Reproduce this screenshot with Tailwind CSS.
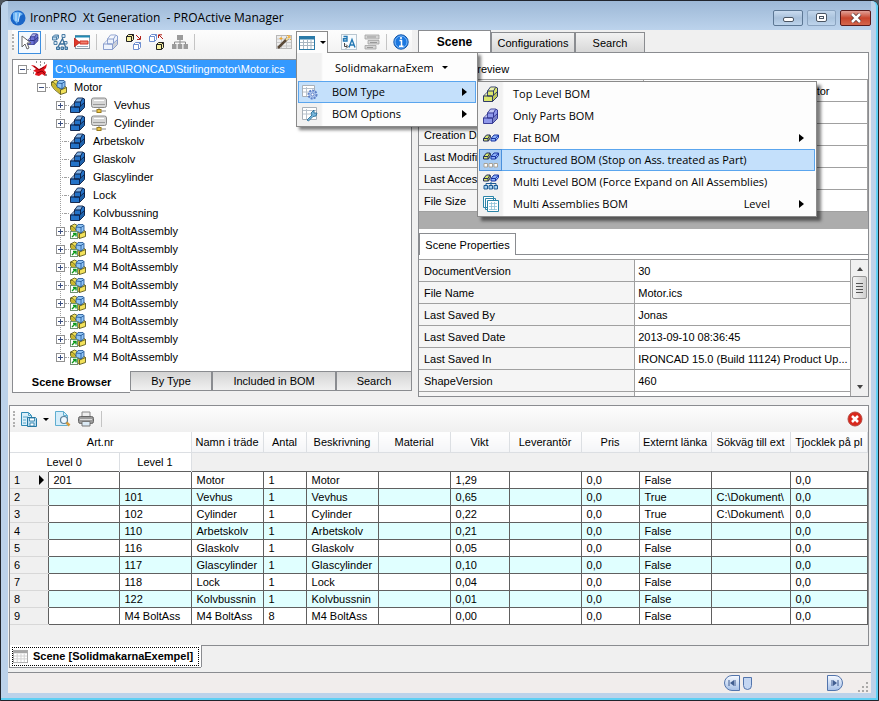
<!DOCTYPE html>
<html lang="sv">
<head>
    <meta charset="UTF-8">
    <meta name="viewport" content="width=device-width, initial-scale=1.0">
    <title>IronPRO Xt Generation - PROActive Manager</title>
    <script src="https://cdn.jsdelivr.net/npm/@tailwindcss/browser@4"></script>
</head>
<body class="bg-[#50575f] font-['Liberation_Sans',Arial,sans-serif] text-[11px] leading-4 text-black">

    <!-- icon set -->
    <svg class="hidden" aria-hidden="true">
        <symbol id="i-part" viewBox="0 0 16 16">
            <g stroke-linejoin="round" fill="currentColor" stroke-width=".9">
                <path d="M4.500 5l3-4h5l2 1v6l-3 3h-7z"/>
                <path d="M.5 10l4-4v4h5l5-4.500v5l-5 5h-9z"/>
                <path d="M5 4.800L7.700 1.500h4.600L10.500 4.800z M1 9.600l3.300-3v3z" fill="#fff" fill-opacity=".45" stroke="none"/>
                <path d="M10 10.200l4-3.500v3.700l-4 4z" fill="#000" fill-opacity=".15" stroke="none"/>
                <path d="M.5 10h9v5.500 M4.500 5h6v4.500 M10.500 5l2-3.500" fill="none"/>
            </g>
        </symbol>
        <symbol id="i-cube" viewBox="0 0 8 8">
            <path d="M.5 2.500l2-2h5v5l-2 2h-5z M.5 2.500h5v5 M5.500 2.500l2-2" stroke-linejoin="round"/>
        </symbol>
        <symbol id="i-assembly" viewBox="0 0 16 16">
            <g stroke="#4a4712" stroke-width=".8" stroke-linejoin="round">
                <path d="M.5 3l4-2 3 1.500 8 6v5l-6 2-6-5-3-4z" fill="#f2e15a"/>
                <path d="M.5 3l3 1 6 7v4.500 M9.500 11l6-2.500" fill="none"/>
                <path d="M1 4l2.500 1 5.500 6.500v3L4 10 1 6.500z" fill="#c9b62c" stroke="none"/>
                <path d="M6 4l2-2.500h5l1 1v5l-3 2.500-5-2z" fill="#8fc4f5" stroke="#1a4f90"/>
                <path d="M6 4l5 .5V10 M11 4.500l3-2" fill="none" stroke="#1a4f90"/>
            </g>
        </symbol>
        <symbol id="i-link" viewBox="0 0 16 16">
            <use href="#i-assembly"/>
            <rect x=".5" y="8.500" width="7" height="7" fill="#fff" stroke="#6f8f6f"/>
            <path d="M2 14l3-3 M3 10.500h3v3" fill="none" stroke="#0d9a1c" stroke-width="1.400"/>
        </symbol>
        <symbol id="i-disk" viewBox="0 0 16 16">
            <rect x=".5" y="1" width="15" height="9.500" rx="2" fill="#d6d6d6" stroke="#8a8a8a"/>
            <path d="M3 3.500h10" stroke="#fff"/><path d="M2 7.500h12" stroke="#9a9a9a"/>
            <path d="M8 10v3 M1 14h14" stroke="#8a8a8a"/><rect x="6" y="12.500" width="4" height="3" fill="#f0c94a" stroke="#9a7d20"/>
        </symbol>
        <symbol id="i-root" viewBox="0 0 18 16">
            <path d="M0 4l3 .5 5 3.500 4-2 4-3-1 4-2 2 2 2-1 4-3-2-3 2-4-1 1-3-3-1 3-2z" fill="#e0141c"/>
            <path d="M3 5l5 4 5-3 M6 12l5-2 3 3" stroke="#8b0008" fill="none"/>
            <path d="M9 1h1M5 1h1M13 2h1M2 12h1M14 14h2M9 4h1" stroke="#222"/>
        </symbol>
        <symbol id="i-letters" viewBox="0 0 16 16">
            <path d="M.5 3l2-2h4v3l-2 2h-4z M.5 3h4v3 M4.500 3l2-2" fill="#bcd8ee" stroke="#4d7fa6"/>
            <path d="M10 .5h3v3h-3z M2 7.500h3v3H2z M12 7.500h3v2.500h-3z" fill="#dbeaf6" stroke="#4d7fa6"/>
            <path d="M6 13l4.500-8.500 3 8.500 M7.500 10h5" fill="none" stroke="#3b6f99" stroke-width="1.300"/>
            <path d="M4.500 13h3v2.500h-3z M9 13h2.500v2.500H9z M13 13h2.500v2.500H13z" fill="#8fbadb" stroke="#3b6f99"/>
        </symbol>
        <symbol id="i-sheet" viewBox="0 0 16 16">
            <rect x=".5" y="1.500" width="15" height="13" fill="#fff" stroke="#2b7aa8"/>
            <path d="M1 3h14" stroke="#2b7aa8" stroke-width="3"/>
            <path d="M1 7.500h14M1 10.500h14M4.500 5v9M8.500 5v9M12 5v9" stroke="#a9b7c2"/>
        </symbol>
        <symbol id="i-outdent" viewBox="0 0 16 16">
            <rect x="1.500" y="1.500" width="14" height="13" fill="#fff" stroke="#8a9aa5"/>
            <path d="M1 2.500h15" stroke="#1f8ab5" stroke-width="2"/>
            <path d="M6 7h8v3H6z" fill="#f08070" stroke="#d03020"/><path d="M3 12.500h11" stroke="#9ab"/>
            <path d="M0 4l6 4.500L0 13z" fill="#e0392b" stroke="#a01810" stroke-width=".6"/>
        </symbol>
        <symbol id="i-org" viewBox="0 0 16 16">
            <path d="M5 1h6v5H5zM0 10h4.500v5H0zM11.500 10H16v5h-4.500zM5.750 10h4.500v5h-4.500z" fill="#9b9b9b"/><path d="M8 6v4M2.500 10V8h11v2" stroke="#8d8d8d" fill="none"/>
        </symbol>
        <symbol id="i-wand" viewBox="0 0 16 16">
            <rect x=".5" y="1.500" width="15" height="13" fill="#ececec" stroke="#b8b8b8"/><path d="M1 5h14M1 8.500h14M1 12h14M5.500 2v12M10.500 2v12" stroke="#c8c8c8"/>
            <path d="M2 14L12 4" stroke="#5b4a38" stroke-width="2.500"/><path d="M10 6l3-3" stroke="#f3dfa0" stroke-width="2"/>
            <path d="M13 1v3M15 3h-3M11 1l1 1M15 6l-1-1M5 3v3M3.500 4.500h3" stroke="#efa62c"/>
        </symbol>
        <symbol id="i-translate" viewBox="0 0 16 16">
            <rect x=".5" y=".5" width="15" height="15" fill="#f6fafd" stroke="#b9c6d0"/>
            <path d="M2.500 2.500h3.500v4.500H2.500V4.800h3.500 M8 13.500l3-8 3 8 M9 11h4" fill="none" stroke="#2378b4" stroke-width="1.400"/><path d="M3.500 9v3.500h2.500M5 10.500l2 2-2 2" stroke="#444" fill="none"/>
        </symbol>
        <symbol id="i-greylist" viewBox="0 0 16 16">
            <path d="M1 1h14v4H1zM4 6.500h11v3.500H4zM1 11.500h11v3.500H1z" fill="#d4d4d4" stroke="#a2a2a2" stroke-width=".8"/><path d="M3 3h9M6 8.500h7M3 13.500h6" stroke="#999"/>
        </symbol>
        <symbol id="i-info" viewBox="0 0 16 16">
            <circle cx="8" cy="8" r="7.200" fill="#1c78e0" stroke="#1356a8"/><circle cx="8" cy="8" r="6" fill="none" stroke="#7bb8fa"/>
            <path d="M6.500 6.500h2v5.500M6 12.200h4.500" stroke="#fff" stroke-width="1.500" fill="none"/><circle cx="8" cy="4" r="1.100" fill="#fff"/>
        </symbol>
        <symbol id="i-gear" viewBox="0 0 16 16">
            <path d="M.5 1.500h12v11H.5z" fill="#fff" stroke="#a8b0b8"/><path d="M1 4.500h11M1 8h11M4.500 3v9" stroke="#b8c2cc"/>
            <circle cx="10.500" cy="10.500" r="4" fill="#b6cdf0" stroke="#5f82c8" stroke-width="2" stroke-dasharray="2 1"/><circle cx="10.500" cy="10.500" r="1.500" fill="#fff" stroke="#5f82c8"/>
        </symbol>
        <symbol id="i-wrench" viewBox="0 0 16 16">
            <path d="M.5 1.500h14v12H.5z" fill="#fff" stroke="#a8b0b8"/><path d="M1 4.500h13M1 8h13M4.500 3v10" stroke="#b8c2cc"/>
            <path d="M5 14l5-5-1-2 3-3v3h3l-1 3-3 .5-4.500 4.500z" fill="#78b7dc" stroke="#2a6f98" stroke-width=".9"/>
        </symbol>
        <symbol id="i-pair" viewBox="0 0 16 8">
            <path d="M.5 4.500L3.500 1H7l.5 2-2 4H.5z" fill="#d9e86a" stroke="#222c58"/><path d="M.5 4.500h4.500V7 M5 4.500L7 1" fill="none" stroke="#222c58"/>
            <path d="M8 4.500L11 1h4.500v2.500L12.500 7H8z" fill="#8fb4fa" stroke="#1733a0"/><path d="M8 4.500h4.500V7 M12.500 4.500L15.500 1" fill="none" stroke="#1733a0"/>
        </symbol>
        <symbol id="i-flat" viewBox="0 0 16 16"><use href="#i-pair" y="4" width="16" height="8"/></symbol>
        <symbol id="i-struct" viewBox="0 0 16 16">
            <use href="#i-pair" width="16" height="8"/><path d="M1 11.500h3.500v3.500H1zM6 11.500h3.500v3.500H6zM11 11.500h3.500v3.500H11z" fill="#fff" stroke="#aaa498"/>
        </symbol>
        <symbol id="i-multi" viewBox="0 0 16 16">
            <use href="#i-pair" width="16" height="8"/><path d="M8 8v3M3 11V9.500h10V11" stroke="#1d5b94" fill="none"/><path d="M1 11.500h3.500v3.500H1zM6 11.500h3.500v3.500H6zM11 11.500h3.500v3.500H11z" fill="#a9d4f2" stroke="#1d5b94"/>
        </symbol>
        <symbol id="i-stack" viewBox="0 0 16 16">
            <path d="M.5 .5h10v11H.5z M2.500 2.500h10v11h-10z" fill="#fff" stroke="#2c85a8"/><path d="M4.500 4.500h11v11h-11z" fill="#fff" stroke="#2c85a8"/><path d="M6 7.500h8M6 10.500h8M6 13.500h8M8.500 6v8M11.500 6v8" stroke="#8cc0d6" stroke-width=".8"/>
        </symbol>
        <symbol id="i-save" viewBox="0 0 16 16">
            <path d="M.5 1.500h7l3 3v10H.5z" fill="#d9effa" stroke="#2f8ab5"/><path d="M7.500 1.500v3h3M2 6h5M2 9h3M2 12h3" fill="none" stroke="#5aa6c9"/>
            <path d="M6.500 6.500h8l1 1v8h-9z" fill="#b8dcf0" stroke="#2678a3"/><path d="M8.500 7h5v3h-5zM9 12h4v3H9z" fill="#fff" stroke="#2678a3" stroke-width=".8"/>
        </symbol>
        <symbol id="i-preview" viewBox="0 0 16 16">
            <path d="M.5 .5h8l4 4v10H.5z" fill="#d5edfa" stroke="#5faed0"/><path d="M8.500 .5v4h4" fill="none" stroke="#5faed0"/>
            <circle cx="9" cy="9" r="3.500" fill="#eef8ff" stroke="#5c7f98" stroke-width="1.200"/><path d="M11.500 11.500l3 3" stroke="#d49a3a" stroke-width="2.500"/>
        </symbol>
        <symbol id="i-print" viewBox="0 0 16 16">
            <path d="M4 1h8v5H4z" fill="#eee" stroke="#888"/><rect x=".5" y="5.500" width="15" height="7" rx="2" fill="#9a9a9a" stroke="#666"/><path d="M2 8.500h12" stroke="#dcdcdc"/><path d="M4 10.500h8v4.500H4z" fill="#dbeaf5" stroke="#777"/>
        </symbol>
    </svg>

    <div class="flex min-h-screen flex-col rounded-t-lg border border-[#20242c] bg-[#b9d1ea]">
        <div class="flex flex-1 flex-col rounded-t-md border-r-2 border-b-2 border-[#5fd0f4] bg-[#bcd2ea] pr-[5px] pb-[5px] pl-[7px]">

            <!-- title bar -->
            <header class="flex h-[29px] items-center bg-linear-to-b from-[#9db8d6] to-[#bcd3ec] pt-1 pl-[2px]">
                <svg class="mr-1 size-4" viewBox="0 0 16 16"><circle cx="8" cy="8" r="7.500" fill="#1a66c8"/><path d="M3 3q5-3 10 1l-4 3-2 7-4-5z" fill="#6cb4f5"/><path d="M6 3v8M10 3l-2 9" stroke="#d4ecff"/></svg>
                <h1 class="flex-1 font-['Open_Sans',sans-serif] text-[12px] whitespace-pre">IronPRO  Xt Generation  - PROActive Manager</h1>
                <div class="flex gap-1">
                    <button aria-label="Minimize" class="flex h-4 w-[30px] items-center justify-center rounded-xs border border-[#5c7794] bg-linear-to-b from-[#cadcf0] via-[#a8c0da] to-[#bdd4ec] pt-1"><span class="h-[5px] w-[11px] rounded-xs border border-[#4a5563] bg-white"></span></button>
                    <button aria-label="Maximize" class="flex h-4 w-[29px] items-center justify-center rounded-xs border border-[#8ba4c0] bg-linear-to-b from-[#c3d7ec] via-[#aac3dd] to-[#bdd4ec]"><span class="flex h-[9px] w-[11px] items-center justify-center rounded-xs border border-[#4a5563] bg-white"><span class="h-[3px] w-[5px] border border-[#4a5563]"></span></span></button>
                    <button aria-label="Close" class="flex h-4 w-[31px] items-center justify-center rounded-xs border border-[#5a1a1a] bg-linear-to-b from-[#e0a097] via-[#c8442c] to-[#d4664c]"><svg class="h-[10px] w-3" viewBox="0 0 12 10"><path d="M2 1l8 8M10 1L2 9" stroke="#5a3030" stroke-width="4"/><path d="M2 1l8 8M10 1L2 9" stroke="#fff" stroke-width="2.500"/></svg></button>
                </div>
            </header>

            <main class="flex flex-1 flex-col bg-[#f0f0f0]">
                <div class="grid h-[367px] grid-cols-[410fr_453fr] grid-rows-[minmax(0,1fr)]">

                    <!-- scene browser -->
                    <section class="flex min-h-0 min-w-0 flex-col pr-[6px] pl-1">
                        <div class="flex h-[29px] shrink-0 items-center bg-linear-to-b from-[#fdfdfd] to-[#f0f0f0] pr-[3px] pb-[5px]">
                            <span class="mr-1 h-4 border-l-2 border-dotted border-[#b0b0b0]"></span>
                            <button aria-label="Select parts" class="flex size-[23px] items-center justify-center border border-[#3c8ee0] bg-[#f4f9ff]">
                                <svg class="h-[18px] w-[18px]" viewBox="0 0 18 18"><use href="#i-part" x="6" y="0" width="12" height="12" color="#6d74d8" stroke="#23287a"/><path d="M1 3v11l3-3 2 5 2-1-2-5h4z" fill="#fff" stroke="#666"/></svg>
                            </button>
                            <span class="mx-1 h-4 border-l border-[#c4c4c4]"></span>
                            <button aria-label="Number parts" class="ml-[2px] size-4"><svg class="size-4"><use href="#i-letters"/></svg></button>
                            <button aria-label="Remove from list" class="ml-[6px] size-4"><svg class="size-4"><use href="#i-outdent"/></svg></button>
                            <span class="mx-[6px] h-4 border-l border-[#c4c4c4]"></span>
                            <button aria-label="Part" class="size-4"><svg class="size-4 stroke-[#8095c8] text-[#eef3fc]"><use href="#i-part"/></svg></button>
                            <button aria-label="Move down" class="ml-[7px] size-4"><svg class="size-4" viewBox="0 0 16 16"><use href="#i-cube" x="0" y="0" width="8" height="8" fill="#f6f0a0" stroke="#222"/><use href="#i-cube" x="7" y="8" width="8" height="8" fill="#fff" stroke="#6f8fd0"/><path d="M10 1l4 4M14.500 2v3.500H11" fill="none" stroke="#b02018"/></svg></button>
                            <button aria-label="Move up" class="ml-[7px] size-4"><svg class="size-4" viewBox="0 0 16 16"><use href="#i-cube" x="0" y="0" width="8" height="8" fill="#fff" stroke="#6f8fd0"/><use href="#i-cube" x="7" y="8" width="8" height="8" fill="#f6f0a0" stroke="#222"/><path d="M14 5l-4-4M9.500 4V.8H13" fill="none" stroke="#b02018"/></svg></button>
                            <button aria-label="Structure" class="ml-[7px] size-4"><svg class="size-4"><use href="#i-org"/></svg></button>
                            <span class="mx-[6px] h-4 border-l border-[#c4c4c4]"></span>
                            <span class="flex-1"></span>
                            <button aria-label="Wizard" class="mr-1 size-4"><svg class="size-4"><use href="#i-wand"/></svg></button>

                            <!-- BOM drop-down, shown open -->
                            <div class="relative z-10">
                                <button aria-label="BOM" aria-expanded="true" class="relative z-20 flex h-[22px] w-8 items-center gap-[5px] border border-b-0 border-[#8a8a8a] bg-[#fdfdfd] pl-[2px]"><svg class="size-4"><use href="#i-sheet"/></svg><span class="border-x-[3px] border-t-[3px] border-x-transparent border-t-black"></span></button>
                                <div class="absolute top-[21px] left-0 w-[182px] border border-[#8a8a8a] bg-[#fdfdfd] bg-linear-to-r from-[#f1f1f1] from-[24px] to-[#fdfdfd] to-[26px] p-px font-['Open_Sans',sans-serif] text-[11px] shadow-[3px_3px_3px_rgba(0,0,0,0.5)]">
                                    <div class="flex h-[27px] items-center pl-[37px]">
                                        <select aria-label="Template" class="w-[98px] appearance-none overflow-hidden text-clip whitespace-nowrap"><option>SolidmakarnaExempel</option></select>
                                        <span class="ml-[9px] border-x-[3px] border-t-[3px] border-x-transparent border-t-black"></span>
                                    </div>
                                    <button class="flex h-[22px] w-full items-center border border-[#5aa5ee] bg-[#c4e0fb] pr-2 pl-[3px] text-left"><svg class="mr-[14px] size-4"><use href="#i-gear"/></svg><span class="flex-1">BOM Type</span><span class="border-y-4 border-l-[5px] border-y-transparent border-l-black"></span></button>
                                    <button class="flex h-[22px] w-full items-center border border-transparent pr-2 pl-[3px] text-left"><svg class="mr-[14px] size-4"><use href="#i-wrench"/></svg><span class="flex-1">BOM Options</span><span class="border-y-4 border-l-[5px] border-y-transparent border-l-black"></span></button>
                                    <div id="bom-types" class="absolute top-[28px] left-[180px] w-[340px] border border-[#8a8a8a] bg-linear-to-r from-[#f1f1f1] from-[24px] to-[#fdfdfd] to-[26px] p-px shadow-[4px_4px_3px_rgba(0,0,0,0.5)]"></div>
                                </div>
                            </div>

                            <button aria-label="Translate" class="ml-[13px] size-4"><svg class="size-4"><use href="#i-translate"/></svg></button>
                            <button aria-label="List" class="ml-[7px] size-4"><svg class="size-4"><use href="#i-greylist"/></svg></button>
                            <span class="mx-[6px] h-4 border-l border-[#c4c4c4]"></span>
                            <button aria-label="Info" class="size-4"><svg class="size-4"><use href="#i-info"/></svg></button>
                        </div>

                        <div class="min-h-0 flex-1 border border-b-0 border-[#8a8c90] bg-white pl-[5px]">
                            <ul id="tree"></ul>
                        </div>
                        <nav class="flex h-[26px] shrink-0 items-start">
                            <button class="h-[22px] flex-[119] border-b border-l border-[#8a8c90] bg-white font-bold">Scene Browser</button>
                            <button class="h-5 flex-[81] border border-[#8a8c90] bg-linear-to-b from-[#d4d4d4] to-[#f0f0f0]">By Type</button>
                            <button class="h-5 flex-[124] border border-[#8a8c90] bg-linear-to-b from-[#d4d4d4] to-[#f0f0f0]">Included in BOM</button>
                            <button class="h-5 flex-[75] border border-[#8a8c90] bg-linear-to-b from-[#d4d4d4] to-[#f0f0f0]">Search</button>
                        </nav>
                    </section>

                    <!-- scene info -->
                    <section class="flex min-h-0 min-w-0 flex-col pr-[2px]">
                        <nav class="flex h-[22px] shrink-0 items-end">
                            <button class="h-[22px] w-[73px] border border-b-0 border-[#8a8c90] bg-white text-[12px] font-bold">Scene</button>
                            <button class="h-5 w-[84px] border border-b-0 border-[#8a8c90] bg-linear-to-b from-[#f2f2f2] to-[#d8d8d8]">Configurations</button>
                            <button class="h-5 w-[70px] border border-b-0 border-[#8a8c90] bg-linear-to-b from-[#f2f2f2] to-[#d8d8d8]">Search</button>
                        </nav>
                        <div class="flex min-h-0 flex-1 flex-col border border-[#8a8c90] bg-white">
                            <h2 class="h-[26px] shrink-0 pt-2 pl-[51px]">Preview</h2>
                            <div class="h-[150px] shrink-0 bg-[#acacac]">
                                <table class="w-full table-fixed border-collapse">
                                    <tbody id="file-info"></tbody>
                                </table>
                            </div>
                            <div class="mt-1 flex shrink-0 items-end">
                                <button class="h-[22px] w-[97px] border border-b-0 border-[#8a8c90] bg-white">Scene Properties</button>
                                <span class="flex-1 border-t border-[#8a8c90]"></span>
                            </div>
                            <div class="mt-1 flex min-h-0 flex-1">
                                <div class="flex-1 overflow-hidden">
                                    <table class="w-full table-fixed border-collapse">
                                        <tbody id="scene-props"></tbody>
                                    </table>
                                </div>
                                <div class="flex w-[17px] flex-col items-center border-t border-[#8a8c90] bg-[#f0f0f0] py-[7px]">
                                    <span class="border-x-[3px] border-b-4 border-x-transparent border-b-[#444]"></span>
                                    <span class="mt-[5px] flex h-[23px] w-[15px] flex-col items-center justify-center gap-[2px] rounded-xs border border-[#979797] bg-linear-to-r from-[#f5f5f5] to-[#cfcfcf]">
                                        <span class="w-[7px] border-t border-[#555]"></span><span class="w-[7px] border-t border-[#555]"></span><span class="w-[7px] border-t border-[#555]"></span><span class="w-[7px] border-t border-[#555]"></span>
                                    </span>
                                    <span class="mt-auto border-x-[3px] border-t-4 border-x-transparent border-t-[#444]"></span>
                                </div>
                            </div>
                        </div>
                    </section>
                </div>

                <!-- bill of materials -->
                <section class="mt-2 mr-[2px] ml-px flex flex-1 flex-col border border-b-0 border-[#8a8c90]">
                    <div class="flex h-[26px] items-center bg-linear-to-b from-[#fdfdfd] to-[#f0f0f0] pr-[5px] pl-[3px]">
                        <span class="mr-[6px] h-4 border-l-2 border-dotted border-[#b0b0b0]"></span>
                        <button aria-label="Save" class="flex items-center gap-[6px]"><svg class="size-4"><use href="#i-save"/></svg><span class="border-x-[3px] border-t-[3px] border-x-transparent border-t-black"></span></button>
                        <button aria-label="Print preview" class="ml-[6px] size-4"><svg class="size-4"><use href="#i-preview"/></svg></button>
                        <button aria-label="Print" class="ml-[7px] size-4"><svg class="size-4"><use href="#i-print"/></svg></button>
                        <span class="mx-[7px] h-4 border-l border-[#c4c4c4]"></span>
                        <button aria-label="Close list" class="ml-auto size-4"><svg class="size-4" viewBox="0 0 16 16"><circle cx="8" cy="8" r="7" fill="#d9271c" stroke="#b5473e"/><path d="M5 5l6 6M11 5l-6 6" stroke="#fff" stroke-width="2.500"/></svg></button>
                    </div>
                    <table class="w-full table-fixed border-collapse">
                        <colgroup>
                            <col class="w-[38px]"><col class="w-[71px]"><col class="w-[72px]"><col class="w-[72px]"><col class="w-[43px]"><col class="w-[72px]"><col class="w-[72px]"><col class="w-[59px]"><col class="w-[72px]"><col class="w-[58px]"><col class="w-[72px]"><col class="w-[79px]"><col>
                        </colgroup>
                        <thead>
                            <tr id="bom-head"></tr>
                            <tr class="h-[19px]">
                                <th colspan="2" class="border-r border-[#dcdfe3] bg-white p-0 font-normal">Level 0</th>
                                <th class="border-r border-[#dcdfe3] bg-white p-0 font-normal">Level 1</th>
                                <td colspan="10"></td>
                            </tr>
                        </thead>
                        <tbody id="bom-body"></tbody>
                    </table>
                    <div class="flex-1"></div>
                </section>

                <div class="mr-[2px] ml-px flex h-[27px] items-start">
                    <button class="flex h-[23px] w-[192px] items-center border-b border-l border-[#8a8c90] bg-white px-[2px] font-bold">
                        <span class="flex h-[19px] w-full items-center gap-[5px] border border-dotted border-black whitespace-nowrap"><svg class="size-[15px] shrink-0 opacity-60 grayscale"><use href="#i-sheet"/></svg>Scene [SolidmakarnaExempel]</span>
                    </button>
                    <span class="h-[22px] flex-1 border-t border-l border-[#8a8c90]"></span>
                </div>

                <footer class="flex h-[21px] items-center border-t border-[#8a8c90] bg-[#f1edec]">
                    <span class="flex-1"></span>
                    <button aria-label="First" class="flex size-4 items-center justify-center rounded-l-full border border-[#5274ac] bg-linear-to-b from-[#f4f8ff] to-[#a9c2e8]"><svg class="size-2" viewBox="0 0 8 8"><path d="M1 1v6M7 1v6" stroke="#405d90"/><path d="M6 1v6L2 4z" fill="#405d90"/></svg></button>
                    <input aria-label="Step" type="range" value="0" class="mx-[3px] h-4 w-[81px] appearance-none bg-transparent [&::-webkit-slider-thumb]:h-[13px] [&::-webkit-slider-thumb]:w-[9px] [&::-webkit-slider-thumb]:appearance-none [&::-webkit-slider-thumb]:rounded-b-md [&::-webkit-slider-thumb]:border [&::-webkit-slider-thumb]:border-[#5274ac] [&::-webkit-slider-thumb]:bg-[#c4d6f2]">
                    <button aria-label="Last" class="flex size-4 items-center justify-center rounded-r-full border border-[#5274ac] bg-linear-to-b from-[#f4f8ff] to-[#a9c2e8]"><svg class="size-2" viewBox="0 0 8 8"><path d="M1 1v6M7 1v6" stroke="#405d90"/><path d="M2 1v6l4-3z" fill="#405d90"/></svg></button>
                    <svg class="mt-2 mr-[3px] ml-[14px] size-[11px]" viewBox="0 0 11 11"><path d="M9 0h2v2H9zM5 4h2v2H5zM9 4h2v2H9zM1 8h2v2H1zM5 8h2v2H5zM9 8h2v2H9z" fill="#aaa9a8"/></svg>
                </footer>
            </main>
        </div>
    </div>

    <script>
        const menu = [
            { icon: "part", text: "Top Level BOM", tone: "stroke-[#1c2860] text-[#dbe66a]" },
            { icon: "part", text: "Only Parts BOM", tone: "stroke-[#2a2f8c] text-[#8f98ea]" },
            { icon: "flat", text: "Flat BOM", sub: true },
            { icon: "struct", text: "Structured BOM (Stop on Ass. treated as Part)", active: true },
            { icon: "multi", text: "Multi Level BOM (Force Expand on All Assemblies)" },
            { icon: "stack", text: "Multi Assemblies BOM", hint: "Level", sub: true }
        ];

        const parts = ["Vevhus", "Cylinder", "Arbetskolv", "Glaskolv", "Glascylinder", "Lock", "Kolvbussning"];

        const fileInfo = [
            ["File Path", "C:\\Dokument\\IRONCAD\\Stirlingmotor"],
            ["File Name", ""],
            ["Creation Date", ""],
            ["Last Modified", ""],
            ["Last Accessed", ""],
            ["File Size", ""]
        ];

        const sceneProps = [
            ["DocumentVersion", "30"],
            ["File Name", "Motor.ics"],
            ["Last Saved By", "Jonas"],
            ["Last Saved Date", "2013-09-10 08:36:45"],
            ["Last Saved In", "IRONCAD 15.0 (Build 11124) Product Up..."],
            ["ShapeVersion", "460"],
            ["", ""]
        ];

        const columns = ["Namn i träde", "Antal", "Beskrivning", "Material", "Vikt", "Leverantör", "Pris", "Externt länka", "Sökväg till ext", "Tjocklek på pl"];

        const rows = [
            ["201", "", "Motor", "1", "Motor", "", "1,29", "", "0,0", "False", "", "0,0"],
            ["", "101", "Vevhus", "1", "Vevhus", "", "0,65", "", "0,0", "True", "C:\\Dokument\\", "0,0"],
            ["", "102", "Cylinder", "1", "Cylinder", "", "0,22", "", "0,0", "True", "C:\\Dokument\\", "0,0"],
            ["", "110", "Arbetskolv", "1", "Arbetskolv", "", "0,21", "", "0,0", "False", "", "0,0"],
            ["", "116", "Glaskolv", "1", "Glaskolv", "", "0,05", "", "0,0", "False", "", "0,0"],
            ["", "117", "Glascylinder", "1", "Glascylinder", "", "0,10", "", "0,0", "False", "", "0,0"],
            ["", "118", "Lock", "1", "Lock", "", "0,04", "", "0,0", "False", "", "0,0"],
            ["", "122", "Kolvbussnin", "1", "Kolvbussnin", "", "0,01", "", "0,0", "False", "", "0,0"],
            ["", "M4 BoltAss", "M4 BoltAss", "8", "M4 BoltAss", "", "0,00", "", "0,0", "False", "", "0,0"]
        ];

        const fill = (id, html) => document.getElementById(id).innerHTML = html;

        fill("bom-types", menu.map(m => `
            <button class="flex h-[22px] w-full items-center border pr-[10px] text-left ${m.active ? "border-[#5aa5ee] bg-[#c4e0fb]" : "border-transparent"}">
                <span class="mr-3 flex h-5 w-[21px] items-center justify-center ${m.active ? "bg-[#a9cdf3] outline outline-[#4a90dc]" : ""}"><svg class="size-4 ${m.tone || ""}"><use href="#i-${m.icon}"/></svg></span>
                <span class="flex-1">${m.text}</span>
                ${m.hint ? `<span class="mr-[29px]">${m.hint}</span>` : ""}
                ${m.sub ? `<span class="border-y-4 border-l-[5px] border-y-transparent border-l-black"></span>` : ""}
            </button>`).join(""));

        // tree
        const box = open => `<button aria-label="${open ? "Collapse" : "Expand"}" class="flex size-[9px] shrink-0 items-center justify-center border border-[#919191] bg-white"><svg class="size-[7px]" viewBox="0 0 7 7"><path d="${open ? "M1 3.500h5" : "M1 3.500h5M3.500 1v5"}" stroke="#3b4f81"/></svg></button>`;
        const dash = `<span class="w-1 border-t border-dotted border-[#a0a0a0]"></span>`;
        const leaf = (name, i) => `
            <li class="flex h-[18px] items-center pl-[38px]">
                ${i < 2 || i > 6 ? box(false) : `<span class="ml-1 w-[5px] border-t border-dotted border-[#a0a0a0]"></span>`}${dash}
                <svg class="ml-px size-4 ${i > 6 ? "" : "stroke-[#0b1c40] text-[#2473c8]"}"><use href="#${i > 6 ? "i-link" : "i-part"}"/></svg>
                ${i < 2 ? `<svg class="ml-[5px] size-4"><use href="#i-disk"/></svg>` : ""}
                <span class="ml-[7px]">${name}</span>
            </li>`;
        fill("tree", `
            <li class="flex h-[18px] items-center">${box(true)}${dash}<svg class="mr-1 h-4 w-[18px]"><use href="#i-root"/></svg><span class="flex-1 bg-[#3399ff] pl-[2px] leading-[18px] text-white">C:\\Dokument\\IRONCAD\\Stirlingmotor\\Motor.ics</span></li>
            <li class="flex h-[18px] items-center pl-[19px]">${box(true)}${dash}<svg class="mr-[7px] ml-px size-4"><use href="#i-assembly"/></svg><span>Motor</span></li>
            <li class="relative"><span class="absolute top-0 bottom-2 left-[42px] border-l border-dotted border-[#a0a0a0]"></span>
                <ul class="relative">${[...parts, ...Array(8).fill("M4 BoltAssembly")].map(leaf).join("")}</ul>
            </li>`);

        const pair = ([k, v]) => `
            <tr class="h-[22px]">
                <th class="border border-l-0 border-[#a0a0a0] bg-[#f5f5f5] p-0 pl-[5px] text-left font-normal">${k}</th>
                <td class="truncate border border-[#a0a0a0] bg-white p-0 pl-[3px]">${v}</td>
            </tr>`;
        fill("file-info", fileInfo.map(pair).join(""));
        fill("scene-props", sceneProps.map(pair).join(""));

        // BOM grid
        fill("bom-head", `<th colspan="3" class="h-5 border-r border-b border-[#dcdfe3] bg-white p-0 font-normal">Art.nr</th>` +
            columns.map(c => `<th class="h-5 overflow-hidden border-r border-b border-[#dcdfe3] bg-linear-to-b from-white to-[#f4f5f7] p-0 font-normal whitespace-nowrap">${c}</th>`).join(""));
        fill("bom-body", rows.map((r, i) => `
            <tr class="h-[17px] ${i % 2 ? "bg-[#e0ffff]" : "bg-white"}">
                <th class="border-y border-[#d8d8d8] bg-[#f0f0f0] p-0 pl-1 font-normal"><span class="flex items-center justify-between pr-1">${i + 1}${i ? "" : `<span class="border-y-[5px] border-l-[5px] border-y-transparent border-l-black"></span>`}</span></th>
                ${r.map(c => `<td class="overflow-hidden border border-[#606060] p-0 pl-[5px] whitespace-nowrap">${c}</td>`).join("")}
            </tr>`).join(""));
    </script>
</body>
</html>
